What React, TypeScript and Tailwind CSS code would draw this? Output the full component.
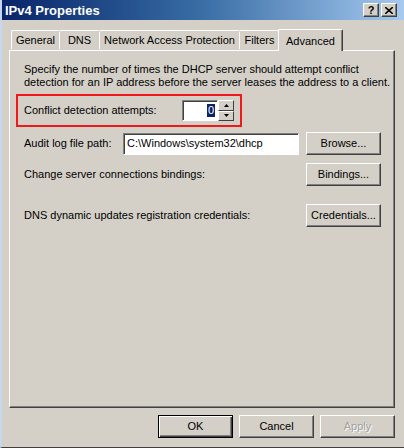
import React from 'react';

const font = { fontFamily: '"Liberation Sans", Arial, sans-serif' };

function TitleButton({ children }: { children: React.ReactNode }) {
  return (
    <div className="w-[16px] h-[14px] bg-[#d4d0c8] border-t border-l border-t-white border-l-white border-r border-b border-r-[#404040] border-b-[#404040] shadow-[inset_-1px_-1px_0_#808080] flex items-center justify-center text-[11px] font-bold leading-none text-black">
      {children}
    </div>
  );
}

function Button({ label, isDefault, disabled }: { label: string; isDefault?: boolean; disabled?: boolean }) {
  return (
    <div
      className={`w-[75px] h-[23px] bg-[#d4d0c8] flex items-center justify-center text-[11px] ${
        isDefault
          ? 'border border-black shadow-[inset_1px_1px_0_#ffffff,inset_-1px_-1px_0_#404040,inset_-2px_-2px_0_#808080]'
          : 'border-t border-l border-t-white border-l-white border-r border-b border-r-[#404040] border-b-[#404040] shadow-[inset_-1px_-1px_0_#808080]'
      } ${disabled ? 'text-[#a0a0a0] [text-shadow:1px_1px_0_#ffffff]' : 'text-black'}`}
    >
      {label}
    </div>
  );
}

const tabs = [
  { label: 'General', w: 'w-[49px]' },
  { label: 'DNS', w: 'w-[41px]' },
  { label: 'Network Access Protection', w: 'w-[141px]' },
  { label: 'Filters', w: 'w-[41px]' },
];

export default function App() {
  return (
    <div style={font} className="w-[404px] h-[448px] bg-[#d4d0c8] overflow-hidden flex flex-col border-l-2 border-l-[#c6d6ec] border-b border-b-[#404040] text-black">
      {/* title bar */}
      <div className="h-[20px] shrink-0 bg-gradient-to-r from-[#0a246a] via-[#3a6ea5] to-[#a6caf0] flex items-center pl-[3px] pr-[7px]">
        <span className="text-white font-bold text-[13px] leading-none">IPv4 Properties</span>
        <div className="ml-auto flex gap-[2px]">
          <TitleButton>?</TitleButton>
          <TitleButton>
            <svg width="8" height="7" viewBox="0 0 8 7"><path d="M0 0 L8 7 M8 0 L0 7" stroke="black" strokeWidth="1.6" /></svg>
          </TitleButton>
        </div>
      </div>

      <div className="pl-[7px] flex flex-col">
        {/* tabs */}
        <div className="mt-[9px] h-[21px] flex items-end pl-[2px] relative z-10">
          {tabs.map(t => (
            <div
              key={t.label}
              className={`${t.w} h-[19px] border-t border-l border-t-white border-l-white border-r border-r-[#404040] rounded-tl-[2px] rounded-tr-[2px] flex items-center justify-center text-[11px] mb-[1px] -mr-[1px]`}
            >
              {t.label}
            </div>
          ))}
          <div className="w-[65px] h-[22px] -mb-[1px] bg-[#d4d0c8] border-t border-l border-t-white border-l-white border-r border-r-[#404040] shadow-[inset_-1px_0_0_#808080] rounded-tl-[2px] rounded-tr-[2px] flex items-start justify-center pt-[3px] text-[11px] -ml-[1px]">
            Advanced
          </div>
        </div>

        {/* panel */}
        <div className="w-[386px] h-[358px] border-t border-l border-t-white border-l-white border-r border-b border-r-[#404040] border-b-[#404040] shadow-[inset_-1px_-1px_0_#808080] flex flex-col text-[11px]">
          <p className="mt-[12px] pl-[14px] leading-[13px]">
            Specify the number of times the DHCP server should attempt conflict
            <br />
            detection for an IP address before the server leases the address to a client.
          </p>

          <div className="mt-[5px] ml-[6px] w-[226px] h-[33px] border-2 border-[#f01818] flex items-center pl-[6px]">
            <span className="w-[158px]">Conflict detection attempts:</span>
            <div className="w-[36px] h-[21px] bg-white border-t border-l border-t-[#808080] border-l-[#808080] border-b border-r border-b-white border-r-white shadow-[inset_1px_1px_0_#404040] flex items-center justify-end pr-[2px]">
              <span className="bg-[#0a246a] text-white leading-[13px] px-[1px]">0</span>
            </div>
            <div className="flex flex-col w-[16px] h-[21px]">
              {[0, 1].map(i => (
                <div key={i} className="h-[10.5px] bg-[#d4d0c8] border-t border-l border-t-white border-l-white border-r border-b border-r-[#404040] border-b-[#404040] flex items-center justify-center">
                  <svg width="5" height="3" viewBox="0 0 5 3">
                    <path d={i === 0 ? 'M2.5 0 L5 3 L0 3 Z' : 'M0 0 L5 0 L2.5 3 Z'} fill="black" />
                  </svg>
                </div>
              ))}
            </div>
          </div>

          <div className="mt-[5px] h-[23px] flex items-center pl-[14px]">
            <span className="w-[99px]">Audit log file path:</span>
            <div className="w-[176px] h-[22px] bg-white border-t border-l border-t-[#808080] border-l-[#808080] border-b border-r border-b-white border-r-white shadow-[inset_1px_1px_0_#404040] pl-[3px] pt-[3px] leading-[13px]">
              C:\Windows\system32\dhcp
            </div>
            <div className="ml-[7px]">
              <Button label="Browse..." />
            </div>
          </div>

          <div className="mt-[8px] h-[23px] flex items-center pl-[14px]">
            <span className="w-[282px]">Change server connections bindings:</span>
            <Button label="Bindings..." />
          </div>

          <div className="mt-[18px] h-[23px] flex items-center pl-[14px]">
            <span className="w-[282px]">DNS dynamic updates registration credentials:</span>
            <Button label="Credentials..." />
          </div>
        </div>

        {/* dialog buttons */}
        <div className="mt-[7px] flex gap-[6px] pl-[149px]">
          <Button label="OK" isDefault />
          <Button label="Cancel" />
          <Button label="Apply" disabled />
        </div>
      </div>
    </div>
  );
}
